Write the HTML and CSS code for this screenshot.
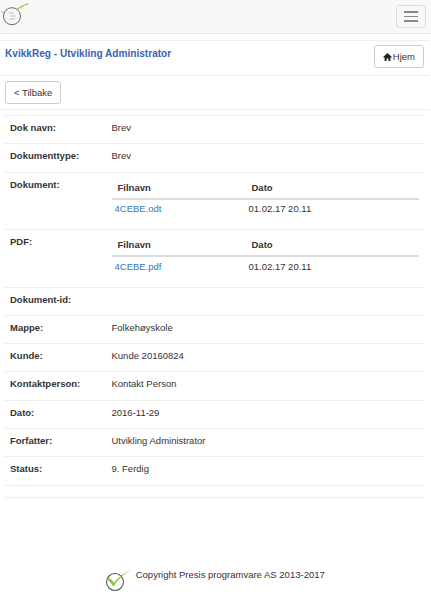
FILE: index.html
```html
<!DOCTYPE html>
<html lang="en">
    <head>
        <meta charset="UTF-8" />
        <meta name="viewport" content="width=device-width, initial-scale=1" />
        <title>KvikkReg</title>
        <link rel="stylesheet" href="styles.css">
    </head>
    <body>

        <header class="navbar">
            <svg class="logo" viewBox="0 0 30 26" aria-hidden="true">
                <circle cx="12" cy="14.200" r="8.500" fill="#f6f6f6" stroke="#666" stroke-width="1"/>
                <path d="M1 9 L4 11" stroke="#9c4" stroke-width="1" fill="none"/>
                <path d="M17 7.500 Q22 3.500 28.500 1.500" stroke="#9c4" stroke-width="1.200" fill="none"/>
                <path d="M8.500 11 H14 M10 14 H16 M9.500 17 H15" stroke="#d4d4d4" stroke-width="1.500" fill="none"/>
            </svg>
            <button class="toggle" type="button" aria-label="Meny">
                <span></span><span></span><span></span>
            </button>
        </header>

        <div class="title-row">
            <h1>KvikkReg - Utvikling Administrator</h1>
            <a class="btn" href="#">
                <svg class="home" viewBox="0 0 12 11" aria-hidden="true">
                    <path d="M6 0 L12 5.600 L11 6.600 L10 5.800 V11 H7.200 V7.500 H4.800 V11 H2 V5.800 L1 6.600 L0 5.600 Z"/>
                </svg>Hjem
            </a>
        </div>

        <div class="back-row">
            <a class="btn" href="#">&lt; Tilbake</a>
        </div>

        <main>
            <div class="row"><div class="label">Dok navn:</div><div class="value">Brev</div></div>
            <div class="row"><div class="label">Dokumenttype:</div><div class="value">Brev</div></div>
            <div class="row row-files">
                <div class="label">Dokument:</div>
                <table class="files">
                    <tr><th>Filnavn</th><th>Dato</th></tr>
                    <tr><td><a href="#">4CEBE.odt</a></td><td>01.02.17 20.11</td></tr>
                </table>
            </div>
            <div class="row row-files">
                <div class="label">PDF:</div>
                <table class="files">
                    <tr><th>Filnavn</th><th>Dato</th></tr>
                    <tr><td><a href="#">4CEBE.pdf</a></td><td>01.02.17 20.11</td></tr>
                </table>
            </div>
            <div class="row"><div class="label">Dokument-id:</div><div class="value"></div></div>
            <div class="row"><div class="label">Mappe:</div><div class="value">Folkehøyskole</div></div>
            <div class="row"><div class="label">Kunde:</div><div class="value">Kunde 20160824</div></div>
            <div class="row"><div class="label">Kontaktperson:</div><div class="value">Kontakt Person</div></div>
            <div class="row"><div class="label">Dato:</div><div class="value">2016-11-29</div></div>
            <div class="row"><div class="label">Forfatter:</div><div class="value">Utvikling Administrator</div></div>
            <div class="row"><div class="label">Status:</div><div class="value">9. Ferdig</div></div>
            <div class="row row-empty"></div>
        </main>

        <footer>
            <svg class="footer-logo" viewBox="0 0 28 24" aria-hidden="true">
                <circle cx="11" cy="14" r="8.500" fill="#fff" stroke="#555" stroke-width="1.100"/>
                <path d="M2 9.500 L9.500 18.500 Q15 9 27 1.500 Q16 7 10 14.500 L7 11 Z" fill="#8cc63f"/>
            </svg>
            <span>Copyright Presis programvare AS 2013-2017</span>
        </footer>

    </body>
</html>
```

FILE: styles.css
```css
* {
  box-sizing: border-box;
}
body {
  margin: 0;
  font-family: 'Liberation Sans', Arial, sans-serif;
  font-size: 9.500px;
  line-height: 14px;
  color: #333;
  background: #fff;
}
a {
  color: #337ab7;
  text-decoration: none;
}
.navbar {
  height: 34px;
  background: #f8f8f8;
  border-bottom: 1px solid #e7e7e7;
  display: flex;
  justify-content: space-between;
  align-items: flex-start;
  padding: 0 5px 0 0;
}
.logo {
  width: 30px;
  height: 26px;
  margin-top: 2px;
}
.toggle {
  width: 30px;
  height: 23px;
  margin-top: 5px;
  padding: 0 7px;
  background: transparent;
  border: 1px solid #ddd;
  border-radius: 3px;
  display: flex;
  flex-direction: column;
  justify-content: center;
  gap: 3px;
}
.toggle span {
  display: block;
  height: 1.500px;
  background: #888;
}
.title-row {
  margin-top: 6px;
  height: 36px;
  border-top: 1px solid #eee;
  border-bottom: 1px solid #eee;
  margin-right: 1px;
  padding: 5px 6px 0 5px;
  display: flex;
  justify-content: space-between;
  align-items: flex-start;
}
h1 {
  margin: 1px 0 0;
  font-size: 10.100px;
  line-height: 14px;
  font-weight: bold;
  color: #3b64ad;
}
.btn {
  display: inline-flex;
  align-items: center;
  height: 23px;
  padding: 0 8px;
  color: #333;
  background: #fff;
  border: 1px solid #ccc;
  border-radius: 3px;
}
.title-row .btn {
  margin-top: -1px;
}
.home {
  width: 9px;
  height: 8px;
  margin-right: 1px;
  fill: #222;
}
.back-row {
  height: 34px;
  padding: 5px 5px 0;
  border-bottom: 1px solid #eee;
  margin-right: 1px;
}
main {
  margin: 5px 7px 0 5px;
  border-top: 1px solid #eee;
}
.row {
  display: flex;
  height: 28.300px;
  padding: 5px 5px 0;
  border-bottom: 1px solid #eee;
}
.row-files {
  height: 57.500px;
}
.row-empty {
  height: 12px;
}
.label {
  width: 101.500px;
  flex-shrink: 0;
  font-weight: bold;
}
.files {
  width: 308px;
  height: 41px;
  border-collapse: collapse;
}
.files th {
  height: 21px;
  padding: 0 6px;
  text-align: left;
  border-bottom: 2px solid #ddd;
}
.files td {
  height: 20px;
  padding: 0 3px;
}
.files th:first-child {
  width: 134px;
}
footer {
  margin-top: 70.500px;
  display: flex;
  justify-content: center;
  align-items: flex-start;
  gap: 3.500px;
}
.footer-logo {
  width: 28px;
  height: 24px;
  margin-left: -2px;
}
```
